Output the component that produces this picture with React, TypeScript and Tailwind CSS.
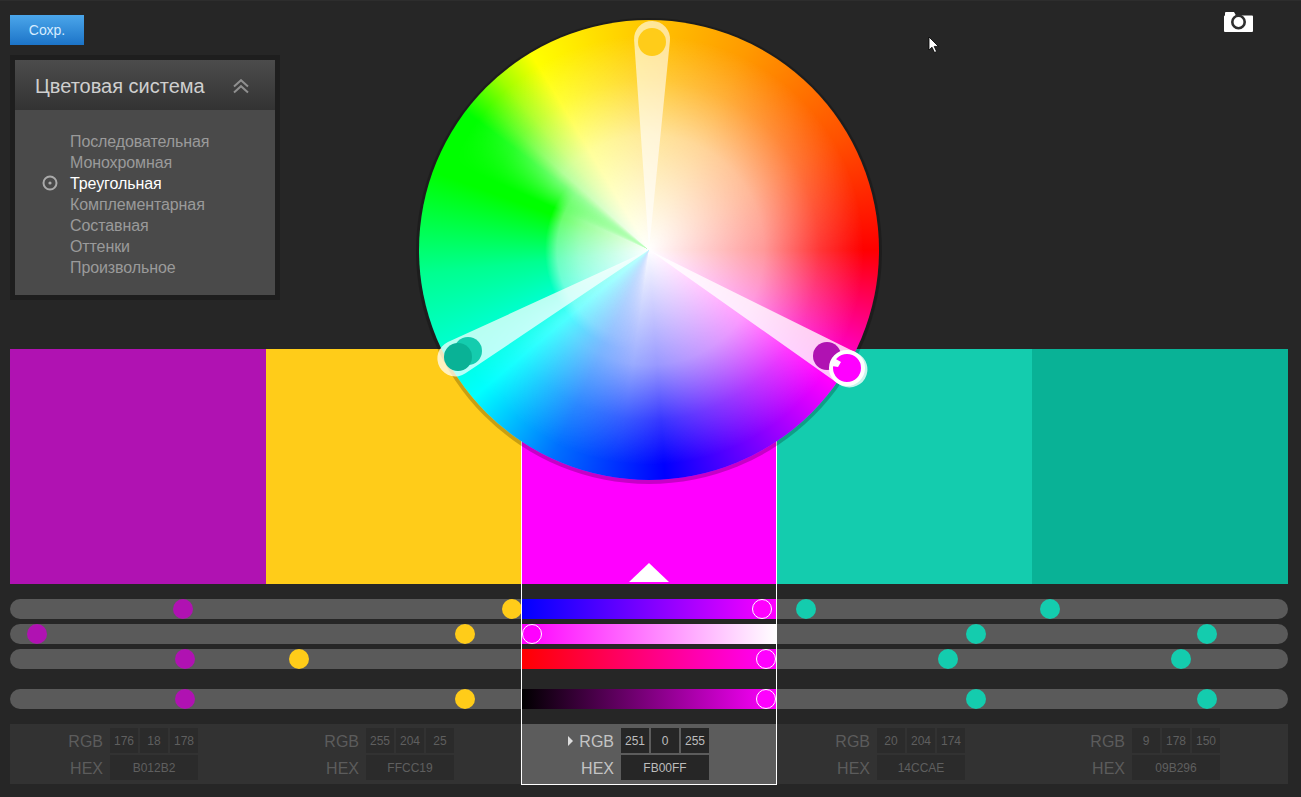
const FONT = "font-['Liberation_Sans',Arial,sans-serif]";

const PURPLE = "#B012B2";
const YELLOW = "#FFCC19";
const TEAL = "#14CCAE";
const TEAL2 = "#09B296";

const systems = ["Последовательная", "Монохромная", "Треугольная", "Комплементарная", "Составная", "Оттенки", "Произвольное"];

const sliders = [
  { handles: [[183, PURPLE], [512, YELLOW], [806, TEAL], [1050, TEAL]], ring: 762, grad: "bg-[linear-gradient(to_right,#0000ff,#ff00ff)]", gap: "" },
  { handles: [[37, PURPLE], [465, YELLOW], [976, TEAL], [1207, TEAL]], ring: 532, grad: "bg-[linear-gradient(to_right,#ff00ff,#ffffff)]", gap: "" },
  { handles: [[185, PURPLE], [299, YELLOW], [948, TEAL], [1181, TEAL]], ring: 766, grad: "bg-[linear-gradient(to_right,#ff0000,#ff00ff)]", gap: "" },
  { handles: [[185, PURPLE], [465, YELLOW], [976, TEAL], [1207, TEAL]], ring: 766, grad: "bg-[linear-gradient(to_right,#000000,#ff00ff)]", gap: "mt-[15px]" },
] as const;

const infos = [
  { w: "w-[256px]", rgb: ["176", "18", "178"], hex: "B012B2", active: false },
  { w: "w-[255px]", rgb: ["255", "204", "25"], hex: "FFCC19", active: false },
  { w: "w-[256px]", rgb: ["251", "0", "255"], hex: "FB00FF", active: true },
  { w: "w-[255px]", rgb: ["20", "204", "174"], hex: "14CCAE", active: false },
  { w: "w-[256px]", rgb: ["9", "178", "150"], hex: "09B296", active: false },
];

const CX = 649;
const CY = 250;

function wedge(hx: number, hy: number, r: number) {
  const dx = hx - CX;
  const dy = hy - CY;
  const d = Math.hypot(dx, dy);
  const base = Math.atan2(dy, dx);
  const off = Math.acos(r / d);
  const a1 = base + off;
  const a2 = base - off;
  const x1 = hx + r * Math.cos(a1);
  const y1 = hy + r * Math.sin(a1);
  const x2 = hx + r * Math.cos(a2);
  const y2 = hy + r * Math.sin(a2);
  return `M${CX} ${CY}L${x1} ${y1}A${r} ${r} 0 1 0 ${x2} ${y2}Z`;
}

function Wheel() {
  return (
    <div className="absolute left-[419px] top-[20px] z-20 h-[460px] w-[460px] rounded-full shadow-[0_1px_0_3px_rgba(0,0,0,0.22)]">
      <div className="absolute inset-0 overflow-hidden rounded-full bg-[conic-gradient(#ffc400_0deg,#ff9a00_26deg,#ff5000_60deg,#ff0000_90deg,#ff0080_108deg,#ff00ff_126deg,#8000ff_150deg,#0000ff_176deg,#0070ff_205deg,#00ffff_230deg,#00ff90_264deg,#00ff00_290deg,#00ff00_307deg,#a0ff00_319deg,#ffff00_329deg,#ffc400_360deg)]">
        <div className="absolute inset-0 bg-[radial-gradient(circle_at_center,rgba(255,255,255,1)_0,rgba(255,255,255,0.6)_115px,rgba(255,255,255,0.22)_170px,rgba(255,255,255,0)_215px)] [mask-image:conic-gradient(#000_0deg,#000_188deg,rgba(0,0,0,0.45)_232deg,transparent_246deg,transparent_294deg,#000_312deg,#000_360deg)]" />
        <div className="absolute inset-0 bg-[radial-gradient(circle_at_center,rgba(255,255,255,1)_0,rgba(255,255,255,0.6)_70px,rgba(255,255,255,0.42)_92px,rgba(255,255,255,0)_104px)] [mask-image:conic-gradient(transparent_0deg,transparent_188deg,rgba(0,0,0,0.55)_232deg,#000_246deg,#000_294deg,transparent_312deg,transparent_360deg)]" />
      </div>
      <svg className="absolute inset-0 overflow-visible" width="460" height="460" viewBox="419 20 460 460">
        <path d={wedge(652, 42, 18)} fill="rgba(255,255,255,0.6)" />
        <path d={wedge(458, 357, 18)} fill="rgba(255,255,255,0.72)" />
        <path d={wedge(847, 368, 18)} fill="rgba(255,255,255,0.78)" />
        <circle cx="652" cy="42" r="14" fill={YELLOW} />
        <circle cx="468" cy="351" r="14" fill={TEAL} />
        <circle cx="458" cy="357" r="14" fill={TEAL2} />
        <circle cx="827" cy="356" r="14" fill={PURPLE} />
        <circle cx="847" cy="368" r="16" fill="#ff00ff" stroke="#ffffff" strokeWidth="4" />
        <path d="M834 358L841 362L838 367L832 366Z" fill="#ffffff" />
      </svg>
    </div>
  );
}

function Camera() {
  return (
    <svg width="29" height="21" viewBox="0 0 29 21">
      <path d="M1 4.5V2a1 1 0 0 1 1-1h8l2 3.5h16a1 1 0 0 1 1 1V20a1 1 0 0 1-1 1H1a1 1 0 0 1-1-1V5.5a1 1 0 0 1 1-1Z" fill="#ffffff" />
      <circle cx="14.5" cy="11" r="6.2" fill="#ffffff" stroke="#2e2e2e" strokeWidth="2.6" />
    </svg>
  );
}

function Cursor() {
  return (
    <svg className="absolute left-[928px] top-[36px] z-30" width="13" height="18" viewBox="0 0 13 18">
      <path d="M1 1V14L4 11.2L6.5 16.5L8.6 15.5L6.2 10.4H10.4Z" fill="#ffffff" stroke="#000000" strokeWidth="0.8" />
    </svg>
  );
}

export default function App() {
  return (
    <div className={`relative h-[797px] w-[1301px] overflow-hidden bg-[#262626] ${FONT}`}>
      <Cursor />
      <Wheel />

      {/* Top: save button, colour system panel, camera */}
      <div className="flex h-[349px] border-t border-t-[#2d2d2d] px-[10px]">
        <div className="flex w-[270px] flex-col pt-[14px]">
          <button className="h-[30px] w-[74px] bg-[linear-gradient(to_bottom,#4ba6ea,#1c74c8)] text-[14px] text-[#d6ecff]">Сохр.</button>
          <div className="mt-[10px] h-[245px] w-[270px] border-[5px] border-[#1e1e1e] bg-[#4a4a4a]">
            <div className="flex h-[50px] items-center justify-between bg-[linear-gradient(to_bottom,#4c4c4c,#333333)] pl-[20px] pr-[26px] pt-[2px]">
              <span className="text-[20px] text-[#cfcfcf]">Цветовая система</span>
              <svg width="16" height="15" viewBox="0 0 16 15" fill="none" stroke="#8f8f8f" strokeWidth="2">
                <path d="M1 7.5L8 1.2L15 7.5" />
                <path d="M1 13.5L8 7.2L15 13.5" />
              </svg>
            </div>
            <div className="relative pl-[55px] pt-[21px]">
              {systems.map((s, i) => (
                <div key={s} className={`relative h-[21px] text-[16px] leading-[21px] tracking-[-0.1px] ${i === 2 ? "text-white" : "text-[#9a9a9a]"}`}>
                  {i === 2 && (
                    <svg className="absolute left-[-28px] top-[2px]" width="16" height="16" viewBox="0 0 16 16">
                      <circle cx="8" cy="8" r="6.5" fill="none" stroke="#aaaaaa" strokeWidth="2" />
                      <circle cx="8" cy="8" r="1.6" fill="#aaaaaa" />
                    </svg>
                  )}
                  {s}
                </div>
              ))}
            </div>
          </div>
        </div>
        <div className="ml-auto mr-[38px] pt-[10px]">
          <Camera />
        </div>
      </div>

      <div className="relative w-[1298px] px-[10px]">
        {/* White frame around the active column */}
        <div className="pointer-events-none absolute bottom-[-1px] left-[521px] top-0 z-10 w-[256px] border-x border-b border-white" />

        {/* Colour strips */}
        <div className="flex h-[235px]">
          <div className="w-[256px] bg-[#B012B2]" />
          <div className="w-[256px] bg-[#FFCC19]" />
          <div className="relative flex w-[255px] items-end justify-center bg-[#ff00ff] pb-[2px] pr-[1px]">
            <div className="h-0 w-0 border-x-[20px] border-b-[19px] border-x-transparent border-b-white" />
          </div>
          <div className="w-[255px] bg-[#14CCAE]" />
          <div className="w-[256px] bg-[#09B296]" />
        </div>

        {/* Sliders */}
        <div className="mt-[15px] flex flex-col gap-[5px]">
          {sliders.map((row, i) => (
            <div key={i} className={`relative flex h-[20px] ${row.gap}`}>
              <div className="w-[512px] rounded-l-full bg-[#5a5a5a]" />
              <div className={`w-[255px] ${row.grad}`} />
              <div className="w-[511px] rounded-r-full bg-[#5a5a5a]" />
              {row.handles.map(([x, c]) => (
                <span
                  key={x}
                  className="absolute top-0 h-[20px] w-[20px] rounded-full"
                  style={{ left: x - 20, backgroundColor: c }}
                />
              ))}
              <span
                className="absolute top-0 h-[20px] w-[20px] rounded-full border border-white bg-[#ff00ff]"
                style={{ left: row.ring - 20 }}
              />
            </div>
          ))}
        </div>

        {/* Values */}
        <div className="mt-[15px] flex h-[60px] bg-[#323232]">
          {infos.map((c) => (
            <div key={c.hex} className={`${c.w} flex flex-col gap-[2px] pt-[4px] ${c.active ? "bg-[#5c5c5c]" : ""}`}>
              <div className="flex h-[25px] items-center gap-[7px]">
                <span className={`relative w-[93px] pt-[2px] text-right text-[16px] ${c.active ? "text-[#c4c4c4]" : "text-[#5c5c5c]"}`}>
                  {c.active && (
                    <span className="absolute right-[41px] top-[8px] h-0 w-0 border-y-[5px] border-l-[5px] border-y-transparent border-l-[#dddddd]" />
                  )}
                  RGB
                </span>
                <div className="flex gap-[2px]">
                  {c.rgb.map((v, i) => (
                    <div key={i} className={`flex h-[25px] w-[28px] items-center justify-center text-[12px] ${c.active ? "bg-[#262626] text-[#bdbdbd]" : "bg-[#2b2b2b] text-[#5f5f5f]"}`}>
                      {v}
                    </div>
                  ))}
                </div>
              </div>
              <div className="flex h-[25px] items-center gap-[7px]">
                <span className={`w-[93px] pt-[2px] text-right text-[16px] ${c.active ? "text-[#c4c4c4]" : "text-[#5c5c5c]"}`}>HEX</span>
                <div className={`flex h-[25px] w-[88px] items-center justify-center text-[12px] ${c.active ? "bg-[#262626] text-[#bdbdbd]" : "bg-[#2b2b2b] text-[#5f5f5f]"}`}>
                  {c.hex}
                </div>
              </div>
            </div>
          ))}
        </div>
      </div>
    </div>
  );
}
